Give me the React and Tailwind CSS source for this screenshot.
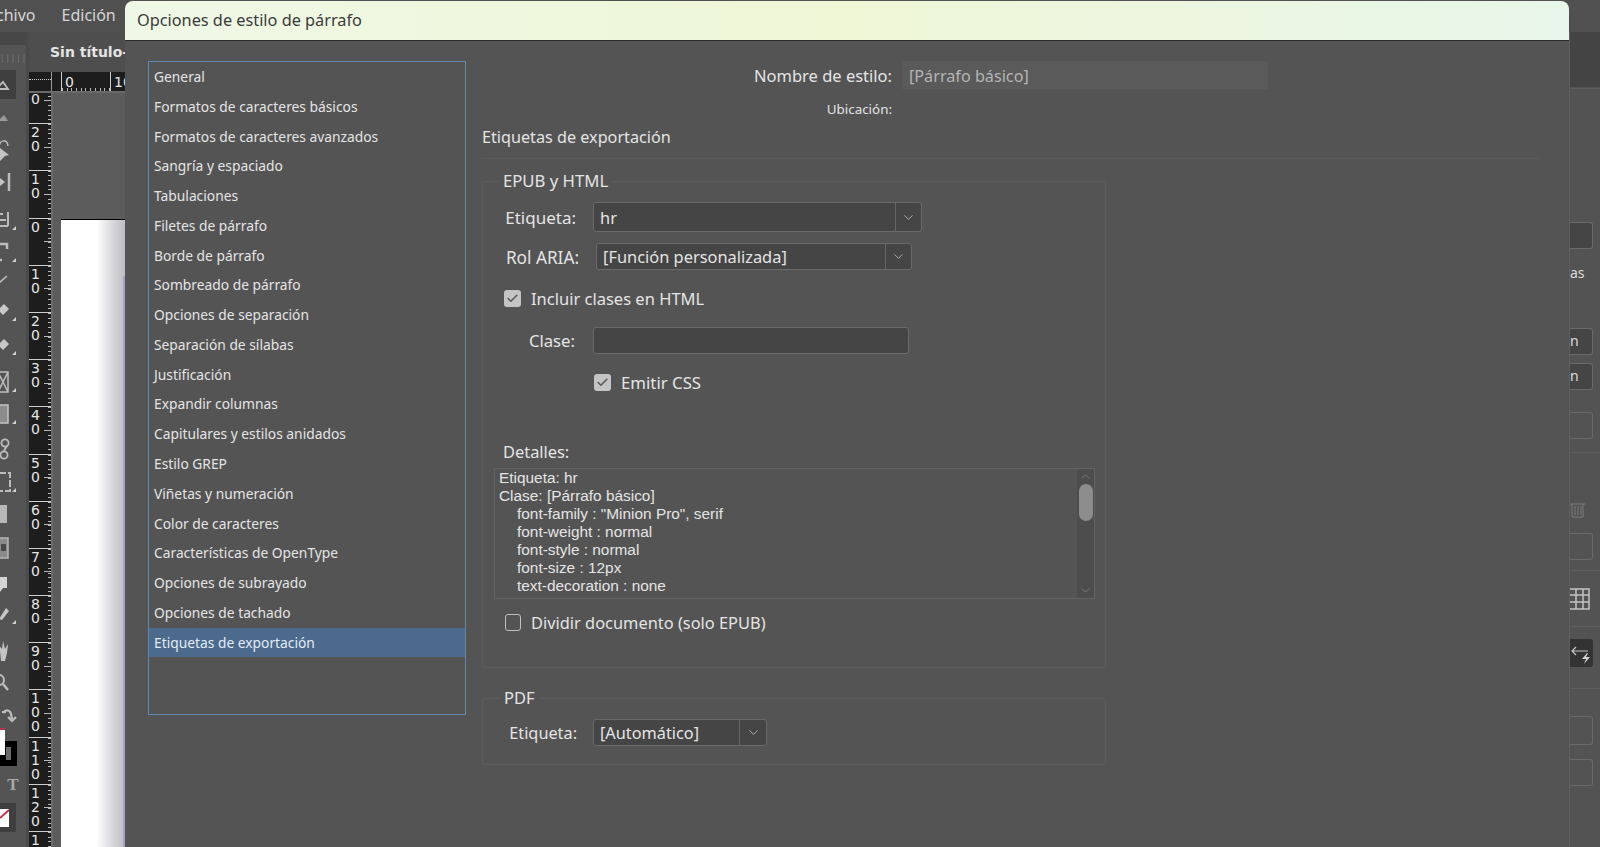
import React from "react";
import { ChevronDown, ChevronUp, Check } from "lucide-react";

const items = ["General","Formatos de caracteres básicos","Formatos de caracteres avanzados","Sangría y espaciado","Tabulaciones","Filetes de párrafo","Borde de párrafo","Sombreado de párrafo","Opciones de separación","Separación de sílabas","Justificación","Expandir columnas","Capitulares y estilos anidados","Estilo GREP","Viñetas y numeración","Color de caracteres","Características de OpenType","Opciones de subrayado","Opciones de tachado","Etiquetas de exportación"];
const rulerLabels = ["30","20","10","0","10","20","30","40","50","60","70","80","90","100","110","120","130"];

const Corner = () => <path d="M12 24l4-4v4z" fill="#d0d0d0" stroke="none" />;
const tools = [
  { m: "", h: "h-[29px]", cls: "bg-[#3f3f3f] w-[16px]", d: <path d="M-4 18l7-7 5 7z" strokeWidth="1.8" /> },
  { m: "mt-[6px]", d: <path d="M-2 17l6-6 4 6z" fill="#9a9a9a" stroke="none" /> },
  { m: "mt-[6px]", d: <><path d="M-1 11c1-8 8-8 9-1" /><path d="M0 12l9 7-4 1-5 5z" fill="#c4c4c4" stroke="none" /></> },
  { m: "mt-[6px]", d: <><path d="M0 10l5 4-5 4z" fill="#c4c4c4" stroke="none" /><path d="M9 5v18" strokeWidth="2.5" /></> },
  { m: "mt-[12px]", d: <><path d="M0 14h6M0 8h3M0 20h8M8 6v14" strokeWidth="2" /><Corner /></> },
  { m: "mt-[6px]", d: <><path d="M0 6h7v5M0 22h2" strokeWidth="2.5" /><Corner /></> },
  { m: "", d: <path d="M-1 19l8-7" strokeWidth="1.6" /> },
  { m: "mt-[7px]", d: <><path d="M-2 13l6-6 5 5-6 6z" fill="#c8c8c8" stroke="none" /><Corner /></> },
  { m: "mt-[8px]", d: <><path d="M-2 14l6-6 5 5-6 6z" fill="#c8c8c8" stroke="none" /><Corner /></> },
  { m: "mt-[11px]", d: <><path d="M-2 4h10v20H-2zM-2 4l10 20M8 4L-2 24" /><Corner /></> },
  { m: "mt-[6px]", d: <><rect x="-2" y="5" width="10" height="18" fill="#8c8c8c" stroke="#c4c4c4" /><Corner /></> },
  { m: "mt-[9px]", d: <><circle cx="5" cy="8" r="3.6" strokeWidth="1.8" /><circle cx="4" cy="20" r="3.6" strokeWidth="1.8" /><path d="M7 11L3 17" strokeWidth="1.8" /></> },
  { m: "mt-[7px]", d: <><rect x="-1" y="5" width="11" height="18" strokeWidth="2" strokeDasharray="7 2" /><Corner /></> },
  { m: "mt-[6px]", d: <rect x="-2" y="5" width="9" height="18" fill="#b8b8b8" stroke="none" /> },
  { m: "mt-[8px]", d: <><rect x="-2" y="4" width="10" height="20" fill="#8a8a8a" stroke="#b4b4b4" /><rect x="1" y="10" width="5" height="7" fill="#4a4a4a" stroke="none" /></> },
  { m: "mt-[10px]", d: <path d="M-2 7h9v11H3l-3 4v-4h-2z" fill="#d4d4d4" stroke="none" /> },
  { m: "mt-[4px]", d: <><path d="M-1 19l7-11 3 3-7 9z" fill="#c8c8c8" stroke="none" /><Corner /></> },
  { m: "mt-[10px]", d: <path d="M1 25L0 15l-2-7 4 5 1-8 2 8 3-5-1 9-2 8z" fill="#c4c4c4" stroke="none" /> },
  { m: "mt-[7px]", d: <><circle cx="-1" cy="11" r="5" strokeWidth="2" /><path d="M3 15l5 6" strokeWidth="2.5" /></> },
  { m: "mt-[7px]", d: <path d="M3 11c3-4 7-3 8 1l1 5M2 10h4M8 15l4 4 4-4" strokeWidth="2.2" /> },
];

function Tool({ t }) {
  return (
    <div className={`${t.h || "h-[26px]"} ${t.m} ${t.cls || "w-[26px]"} shrink-0 flex items-center`}>
      <svg width="22" height="28" viewBox="0 0 22 28" fill="none" stroke="#bcbcbc" strokeWidth="1.5" className="block shrink-0">{t.d}</svg>
    </div>
  );
}

const Chev = ({ w }) => (
  <div className={`${w} self-stretch border-l border-[#666666] flex items-center justify-center`}>
    <ChevronDown size={15} strokeWidth={1.25} color="#c8c8c8" />
  </div>
);

const Box = ({ on }) => (
  <div className={on ? "w-[17px] h-[17px] rounded-[3px] bg-[#c4c4c4] flex items-center justify-center" : "w-[16px] h-[17px] rounded-[3px] border border-[#c0c0c0]"}>
    {on && <Check size={13} strokeWidth={3} color="#5a5a5a" />}
  </div>
);

const F = "font-['Noto_Sans',sans-serif]";

export default function App() {
  return (
    <div className={`relative w-[1600px] h-[847px] overflow-hidden bg-[#535353] flex flex-col ${F}`}>
      {/* menu bar */}
      <div className="h-[32px] shrink-0 flex items-center gap-[26px] -ml-[4px] pb-[2px] text-[16px] text-[#d6d6d6] bg-[#505050]">
        <span>chivo</span>
        <span>Edición</span>
      </div>
      <div className="flex-1 flex min-h-0">
        {/* tools */}
        <div className="w-[29px] shrink-0 flex flex-col overflow-hidden border-r-[3px] border-[#4a4a4a] bg-[#545454]">
          <div className="h-[13px] shrink-0 bg-[#474747]" />
          <div className="h-[25px] shrink-0 text-[8px] leading-[25px] tracking-[1px] text-[#7c7c7c] overflow-hidden">||||||</div>
          {tools.map((t, i) => <Tool key={i} t={t} />)}
          <div className="h-[36px] mt-px w-[26px] shrink-0">
            <div className="relative w-[17px] h-[36px]">
              <div className="absolute left-0 top-[11px] w-[17px] h-[25px] border-[6px] border-black bg-[#6a6a6a]" />
              <div className="absolute left-0 top-[-2px] w-[5px] h-[27px] bg-white border-t-2 border-[#c0304a]" />
            </div>
          </div>
          <div className="h-[37px] w-[26px] shrink-0 flex items-center justify-center text-[#a8a8a8] text-[17px] font-bold font-['Liberation_Serif',serif]">T</div>
          <div className="h-[29px] w-[16px] shrink-0 bg-[#3f3f3f] flex items-center">
            <svg width="9" height="18" viewBox="0 0 9 18"><rect width="9" height="18" fill="#ffffff" /><path d="M0 9L9 1" stroke="#c0304a" strokeWidth="2" /></svg>
          </div>
        </div>
        {/* document */}
        <div className="flex-1 flex flex-col min-w-0">
          <div className="h-[40px] shrink-0 bg-[#4e4e4e] flex items-center pl-[21px] whitespace-nowrap text-[14px] font-bold text-[#e4e4e4] font-['DejaVu_Sans',sans-serif]">Sin título-</div>
          {/* horizontal ruler */}
          <div className="h-[21px] shrink-0 bg-[#1d1d1d] flex border-b-2 border-[#6a6a6a] overflow-hidden text-[14px] leading-[20px] text-[#e6e6e6] font-['DejaVu_Sans',sans-serif]">
            <div className="w-[22px] h-[8px] shrink-0 border-b border-dotted border-[#d0d0d0]" />
            <div className="w-[10px] shrink-0 border-l border-[#999999]" />
            <div className="w-[49px] shrink-0 border-l border-[#cccccc] pl-[3px] bg-[repeating-linear-gradient(to_right,#b8b8b8_0_1px,transparent_1px_4.7px)] bg-no-repeat bg-bottom bg-[length:100%_3px]">0</div>
            <div className="w-[50px] shrink-0 border-l border-[#cccccc] pl-[3px]">10</div>
          </div>
          <div className="flex-1 flex min-h-0">
            {/* vertical ruler */}
            <div className="w-[22px] shrink-0 bg-[#1d1d1d] overflow-hidden text-[14px] leading-[14px] text-[#e6e6e6] font-['DejaVu_Sans',sans-serif]">
              <div className="-mt-[17px]">
                {rulerLabels.map((l, i) => (
                  <div key={i} className="h-[47.2px] border-t border-[#cfcfcf] flex">
                    <div className="w-[14px] pt-px pl-[2px] break-all">{l}</div>
                    <div className="flex-1 flex items-center justify-end bg-[repeating-linear-gradient(to_bottom,#b8b8b8_0_1px,transparent_1px_4.7px)] bg-no-repeat bg-right bg-[length:3px_100%]">
                      <div className="w-[7px] h-px bg-[#b8b8b8]" />
                    </div>
                  </div>
                ))}
              </div>
            </div>
            {/* canvas */}
            <div className="flex-1 bg-[#5c5c5c] pl-[8px] pt-[126px] border-l-2 border-[#6c6c6c]">
              <div className="relative h-full bg-gradient-to-r from-white from-[55%] to-[#bcbcc2] border-t border-black">
                <div className="absolute right-0 top-[56px] bottom-0 w-[2px] bg-[#a79fc4]" />
              </div>
            </div>
          </div>
        </div>
        <div className="w-[1444px] shrink-0" />
        {/* right panel */}
        <div className="w-[31px] shrink-0 flex flex-col bg-[#535353] text-[14px] text-[#dcdcdc] border-l border-[#5e5e5e]">
          <div className="h-[55px] shrink-0 bg-[#444444]" />
          <div className="h-[45px] shrink-0 border-t border-[#5e5e5e] mt-px" />
          <div className="h-[27px] w-[23px] mt-[89px] shrink-0 rounded-r-[3px] bg-[#454545] border-y border-r border-[#6a6a6a]" />
          <div className="h-[24px] mt-[12px] shrink-0 leading-[24px]">as</div>
          <div className="h-[27px] w-[23px] mt-[43px] shrink-0 rounded-r-[3px] bg-[#454545] border-y border-r border-[#6a6a6a] leading-[24px]">n</div>
          <div className="h-[27px] w-[23px] mt-[8px] shrink-0 rounded-r-[3px] bg-[#454545] border-y border-r border-[#6a6a6a] leading-[24px]">n</div>
          <div className="h-[27px] w-[23px] mt-[22px] shrink-0 rounded-r-[3px] border-y border-r border-[#6a6a6a]" />
          <div className="h-px mt-[13px] shrink-0 bg-[#5e5e5e]" />
          <div className="h-[16px] mt-[49px] shrink-0">
            <svg width="16" height="16" viewBox="0 0 16 16" fill="none" stroke="#7c7c7c"><path d="M0 2h15M2 2v13h11V2M5 4v9M8 4v9M11 4v9" /></svg>
          </div>
          <div className="h-[27px] w-[23px] mt-[15px] shrink-0 rounded-r-[3px] border-y border-r border-[#6a6a6a]" />
          <div className="h-px mt-[10px] shrink-0 bg-[#5e5e5e]" />
          <div className="h-[22px] mt-[17px] shrink-0">
            <svg width="20" height="22" viewBox="0 0 20 22" fill="none" stroke="#c4c4c4" strokeWidth="1.5"><path d="M0 1h19v20H0M0 7h19M0 14h19M6 1v20M13 1v20" /></svg>
          </div>
          <div className="h-px mt-[16px] shrink-0 bg-[#5e5e5e]" />
          <div className="h-[28px] w-[23px] mt-[12px] shrink-0 rounded-r-[3px] bg-[#333333]">
            <svg width="23" height="28" viewBox="0 0 23 28" fill="none" stroke="#c4c4c4" strokeWidth="1.2"><path d="M6 8l-4 4 4 4M2 12h16" /><path d="M17 14l-5 6h4l-2 5 6-7h-4l2-4z" fill="#d0d0d0" stroke="none" /></svg>
          </div>
          <div className="h-px mt-[21px] shrink-0 bg-[#5e5e5e]" />
          <div className="h-[29px] w-[23px] mt-[27px] shrink-0 rounded-r-[3px] border-y border-r border-[#6a6a6a]" />
          <div className="h-[27px] w-[23px] mt-[14px] shrink-0 rounded-r-[3px] border-y border-r border-[#6a6a6a]" />
        </div>
      </div>

      {/* dialog */}
      <div className="absolute left-[125px] top-px w-[1444px] bottom-0 flex flex-col rounded-t-[8px] overflow-hidden bg-[#545454]">
        <div className="h-[40px] shrink-0 flex items-center pl-[12px] text-[16.3px] text-[#3a3a3a] bg-gradient-to-r from-[#eff8e6] via-[#eff6d6] to-[#e8f6ea] border-b border-[#2c2c2c]">
          Opciones de estilo de párrafo
        </div>
        <div className="flex-1 flex items-start pt-[20px] pl-[23px] min-h-0 text-[#e4e4e4]">
          <div className="w-[318px] h-[654px] shrink-0 border-[1.5px] border-[#6488ad] text-[13.8px]">
            {items.map((t, i) => (
              <div key={t} className={`h-[29.77px] flex items-center pl-[5px] pt-px ${i === 19 ? "bg-[#4b6a8c] text-[#e2ecf8]" : ""}`}>{t}</div>
            ))}
          </div>
          <div className="w-[1058px] ml-[16px] shrink-0 flex flex-col">
            <div className="h-[28px] flex items-center">
              <div className="w-[410px] text-right text-[16.5px] pt-[2px]">Nombre de estilo:</div>
              <div className="ml-[10px] w-[366px] h-full bg-[#5a5a5a] pl-[7px] pt-[2px] flex items-center text-[16.2px] text-[#b4b4b4]">[Párrafo básico]</div>
            </div>
            <div className="h-[20px] mt-[10px] w-[410px] text-right text-[13.4px] leading-[20px]">Ubicación:</div>
            <div className="h-[24px] mt-[6px] text-[16.2px] leading-[24px]">Etiquetas de exportación</div>
            <div className="h-px mt-[9px] bg-[#5a5a5a]" />

            <fieldset className="mt-[12px] w-[624px] h-[497px] border border-[#5c5c5c] rounded-[3px] text-[16.4px]">
              <legend className="ml-[16px] px-[4px] h-[20px] leading-[20px] text-[16.7px]">EPUB y HTML</legend>
              <div className="flex items-center mt-[11px] h-[30px]">
                <div className="w-[93px] text-right text-[17px] pt-px">Etiqueta:</div>
                <div className="ml-[17px] w-[329px] h-full flex items-center bg-[#454545] border border-[#6a6a6a] rounded-[3px]">
                  <div className="flex-1 pl-[6px] pt-[2px]">hr</div><Chev w="w-[26px]" />
                </div>
              </div>
              <div className="flex items-center mt-[11px] h-[27px]">
                <div className="w-[96px] text-right text-[17.2px] pt-[2px]">Rol ARIA:</div>
                <div className="ml-[17px] w-[316px] h-full flex items-center bg-[#454545] border border-[#6a6a6a] rounded-[3px]">
                  <div className="flex-1 pl-[6px] pt-[2px]">[Función personalizada]</div><Chev w="w-[26px]" />
                </div>
              </div>
              <div className="flex items-center mt-[20px] h-[17px] ml-[21px]">
                <Box on /><span className="ml-[10px] text-[16.5px] pt-[2px]">Incluir clases en HTML</span>
              </div>
              <div className="flex items-center mt-[20px] h-[27px]">
                <div className="w-[92px] text-right text-[16.7px]">Clase:</div>
                <div className="ml-[18px] w-[316px] h-full bg-[#454545] border border-[#6a6a6a] rounded-[3px]" />
              </div>
              <div className="flex items-center mt-[20px] h-[17px] ml-[111px]">
                <Box on /><span className="ml-[10px] text-[16.8px]">Emitir CSS</span>
              </div>
              <div className="mt-[51px] ml-[20px] h-[20px] leading-[20px] text-[16.4px]">Detalles:</div>
              <div className="mt-[6px] ml-[11px] w-[601px] h-[131px] border border-[#636363] flex text-[15.4px] leading-[18px] font-['Liberation_Sans',sans-serif]">
                <div className="flex-1 overflow-hidden pl-[4px]">
                  <div>Etiqueta: hr</div>
                  <div>Clase: [Párrafo básico]</div>
                  <div className="pl-[18px]">font-family : "Minion Pro", serif</div>
                  <div className="pl-[18px]">font-weight : normal</div>
                  <div className="pl-[18px]">font-style : normal</div>
                  <div className="pl-[18px]">font-size : 12px</div>
                  <div className="pl-[18px]">text-decoration : none</div>
                </div>
                <div className="w-[17px] bg-[#4d4d4d] flex flex-col items-center">
                  <ChevronUp size={13} strokeWidth={1} color="#a0a0a0" className="shrink-0 mt-px" />
                  <div className="w-[14px] h-[37px] mt-px bg-[#8c8c8c] rounded-[7px]" />
                  <div className="flex-1" />
                  <ChevronDown size={13} strokeWidth={1} color="#a0a0a0" className="shrink-0 mb-px" />
                </div>
              </div>
              <div className="flex items-center mt-[15px] h-[17px] ml-[22px]">
                <Box /><span className="ml-[10px] pt-[2px]">Dividir documento (solo EPUB)</span>
              </div>
            </fieldset>

            <fieldset className="mt-[20px] w-[624px] h-[77px] border border-[#5c5c5c] rounded-[3px] text-[16.3px]">
              <legend className="ml-[17px] px-[4px] h-[20px] leading-[20px] text-[16.5px]">PDF</legend>
              <div className="flex items-center mt-[11px] h-[27px]">
                <div className="w-[94px] text-right pt-[2px]">Etiqueta:</div>
                <div className="ml-[16px] w-[174px] h-full flex items-center bg-[#454545] border border-[#6a6a6a] rounded-[3px]">
                  <div className="flex-1 pl-[6px] pt-[2px]">[Automático]</div><Chev w="w-[27px]" />
                </div>
              </div>
            </fieldset>
          </div>
        </div>
      </div>
    </div>
  );
}
